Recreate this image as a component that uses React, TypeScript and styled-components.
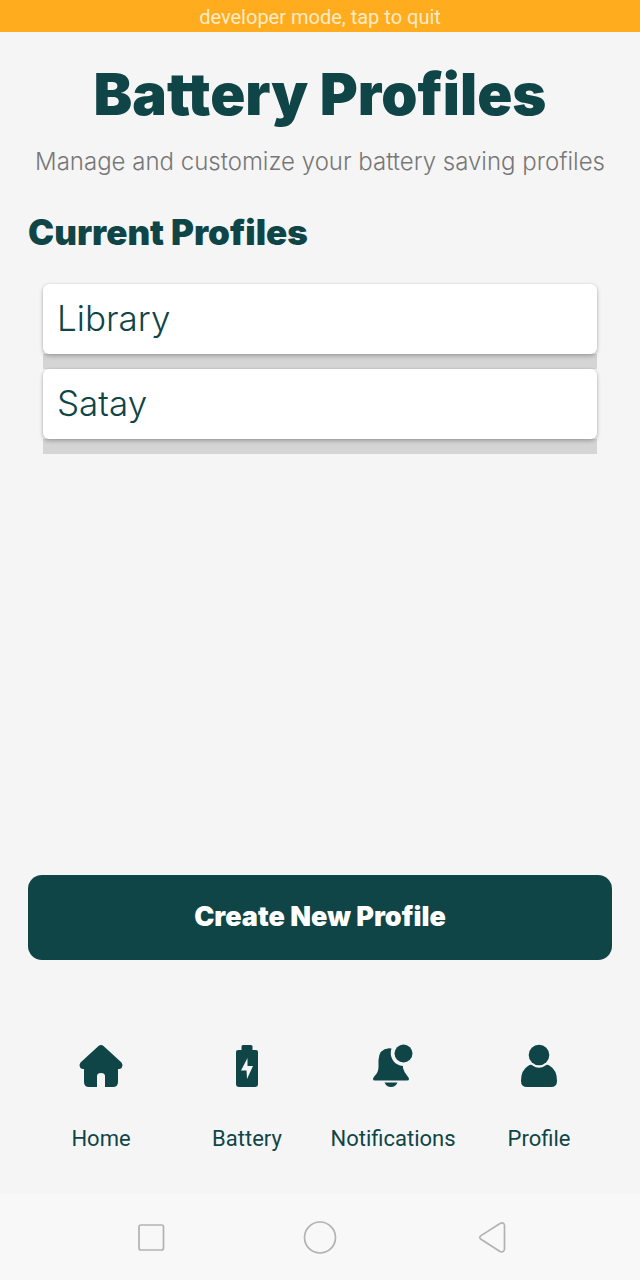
import React from "react";
import styled, { createGlobalStyle } from "styled-components";

const GlobalStyle = createGlobalStyle`
  * { box-sizing: border-box; }
  body { margin: 0; background: #f5f5f5; }
`;

const ink = "#104547";
const display = `Inter, "Liberation Sans", sans-serif`;
const system = `Roboto, "Liberation Sans", sans-serif`;

const Screen = styled.div`
  display: flex;
  flex-direction: column;
  min-height: 100vh;
  background: #f5f5f5;
  color: ${ink};
  font-family: ${display};
`;

const DevBanner = styled.button`
  height: 32px;
  padding: 2px 0 0;
  border: 0;
  background: #ffac1f;
  color: #ffebc8;
  font: 400 20px/30px ${system};
`;

const Main = styled.main`
  flex: 1;
  display: flex;
  flex-direction: column;
  padding: 26px 28px 0;
`;

const Title = styled.h1`
  margin: 0;
  font-size: 58px;
  font-weight: 900;
  line-height: 72px;
  text-align: center;
`;

const Subtitle = styled.p`
  margin: 16px 0 0;
  color: #777;
  font-size: 24px;
  font-weight: 300;
  line-height: 32px;
  text-align: center;
`;

const SectionTitle = styled.h2`
  margin: 34px 0 0;
  font-size: 35px;
  font-weight: 900;
  line-height: 40px;
`;

const ProfileList = styled.ul`
  margin: 32px 15px 0;
  padding: 0;
  list-style: none;
`;

const ProfileItem = styled.li`
  border-bottom: 15px solid #d5d5d5;
`;

const ProfileCard = styled.button`
  display: block;
  width: 100%;
  height: 70px;
  padding: 0 14px 2px;
  border: 0;
  border-radius: 6px;
  background: #fff;
  box-shadow: 0 2px 4px rgba(0, 0, 0, 0.25), 0 0 2px rgba(0, 0, 0, 0.12);
  color: ${ink};
  font: 300 35px/40px ${display};
  text-align: left;
`;

const CreateButton = styled.button`
  height: 85px;
  margin-top: auto;
  padding: 0 0 2px;
  border: 0;
  border-radius: 14px;
  background: ${ink};
  color: #fff;
  font: 900 27px/32px ${display};
`;

const TabBar = styled.nav`
  display: grid;
  grid-template-columns: repeat(4, 1fr);
  padding: 84px 28px 41px;
`;

const Tab = styled.a`
  display: flex;
  flex-direction: column;
  align-items: center;
  gap: 37px;
  color: ${ink};
  font: 400 22px/28px ${system};
  text-decoration: none;
  svg { display: block; fill: currentColor; }
`;

const SystemBar = styled.footer`
  display: flex;
  justify-content: center;
  gap: 129px;
  height: 86px;
  background: #f8f8f8;
`;

const SystemButton = styled.button`
  width: 40px;
  padding: 0;
  border: 0;
  background: none;
  svg {
    display: block;
    margin: auto;
    fill: none;
    stroke: #b2b2b2;
    stroke-width: 1.7;
    stroke-linejoin: round;
  }
`;

const profiles = ["Library", "Satay"];

const tabs = [
  {
    label: "Home",
    icon: <path d="M19.5 2Q22 0 24.500 2L42.500 18.500Q44 20.500 43 23Q42.500 25 39 25V38Q39 43 34 43H26V32Q26 29 22 29Q18 29 18 32V43H10Q5 43 5 38V25Q1.500 25 1 23Q0 20.500 1.500 18.500Z" />,
  },
  {
    label: "Battery",
    icon: <path fillRule="evenodd" d="M18 1H26Q27.500 1 27.500 2.500V6H31Q33 6 33 8V40Q33 43 30 43H14Q11 43 11 40V8Q11 6 13 6H16.500V2.500Q16.500 1 18 1ZM22.500 14L16 26.500H21.500L22 35L28 22H22.500Z" />,
  },
  {
    label: "Notifications",
    icon: (
      <>
        <circle cx="32.500" cy="9.500" r="9" />
        <path d="M20.500 4.500A13 13 0 0 0 32 22V24Q33 28 36 31.500Q38 34 38 35Q38 36.500 36 36.500H4Q2 36.500 2 35Q2 34 4 31.500Q7.500 28 7.500 23V16Q8 5 18 4.300ZM13.500 38.500H26.500Q24.500 43 20 43Q15.500 43 13.500 38.500Z" />
      </>
    ),
  },
  {
    label: "Profile",
    icon: (
      <>
        <circle cx="22" cy="11" r="10.300" />
        <path d="M11 22Q14 20 15.500 21.500Q22 26 28.500 21.500Q30 20 33 22Q40 26 40 37Q40 43 34 43H10Q4 43 4 37Q4 26 11 22Z" />
      </>
    ),
  },
];

const systemKeys = [
  { label: "Recent apps", icon: <rect x="8" y="8" width="24.500" height="25" rx="2" /> },
  { label: "Home screen", icon: <circle cx="20" cy="20.500" r="15.500" /> },
  { label: "Back", icon: <path d="M12 18.600L31 6.500Q35 4.500 35.500 8.500V32Q35 36 31 34.500L12 22.200Q9.500 20.400 12 18.600Z" /> },
];

export default function App() {
  return (
    <Screen>
      <GlobalStyle />
      <DevBanner type="button">developer mode, tap to quit</DevBanner>
      <Main>
        <Title>Battery Profiles</Title>
        <Subtitle>Manage and customize your battery saving profiles</Subtitle>
        <SectionTitle>Current Profiles</SectionTitle>
        <ProfileList>
          {profiles.map((name) => (
            <ProfileItem key={name}>
              <ProfileCard type="button">{name}</ProfileCard>
            </ProfileItem>
          ))}
        </ProfileList>
        <CreateButton type="button">Create New Profile</CreateButton>
      </Main>
      <TabBar>
        {tabs.map(({ label, icon }) => (
          <Tab key={label} href="#">
            <svg width="44" height="44" viewBox="0 0 44 44" aria-hidden="true">{icon}</svg>
            {label}
          </Tab>
        ))}
      </TabBar>
      <SystemBar>
        {systemKeys.map(({ label, icon }) => (
          <SystemButton key={label} type="button" aria-label={label}>
            <svg width="40" height="40" viewBox="0 0 40 40" aria-hidden="true">{icon}</svg>
          </SystemButton>
        ))}
      </SystemBar>
    </Screen>
  );
}
